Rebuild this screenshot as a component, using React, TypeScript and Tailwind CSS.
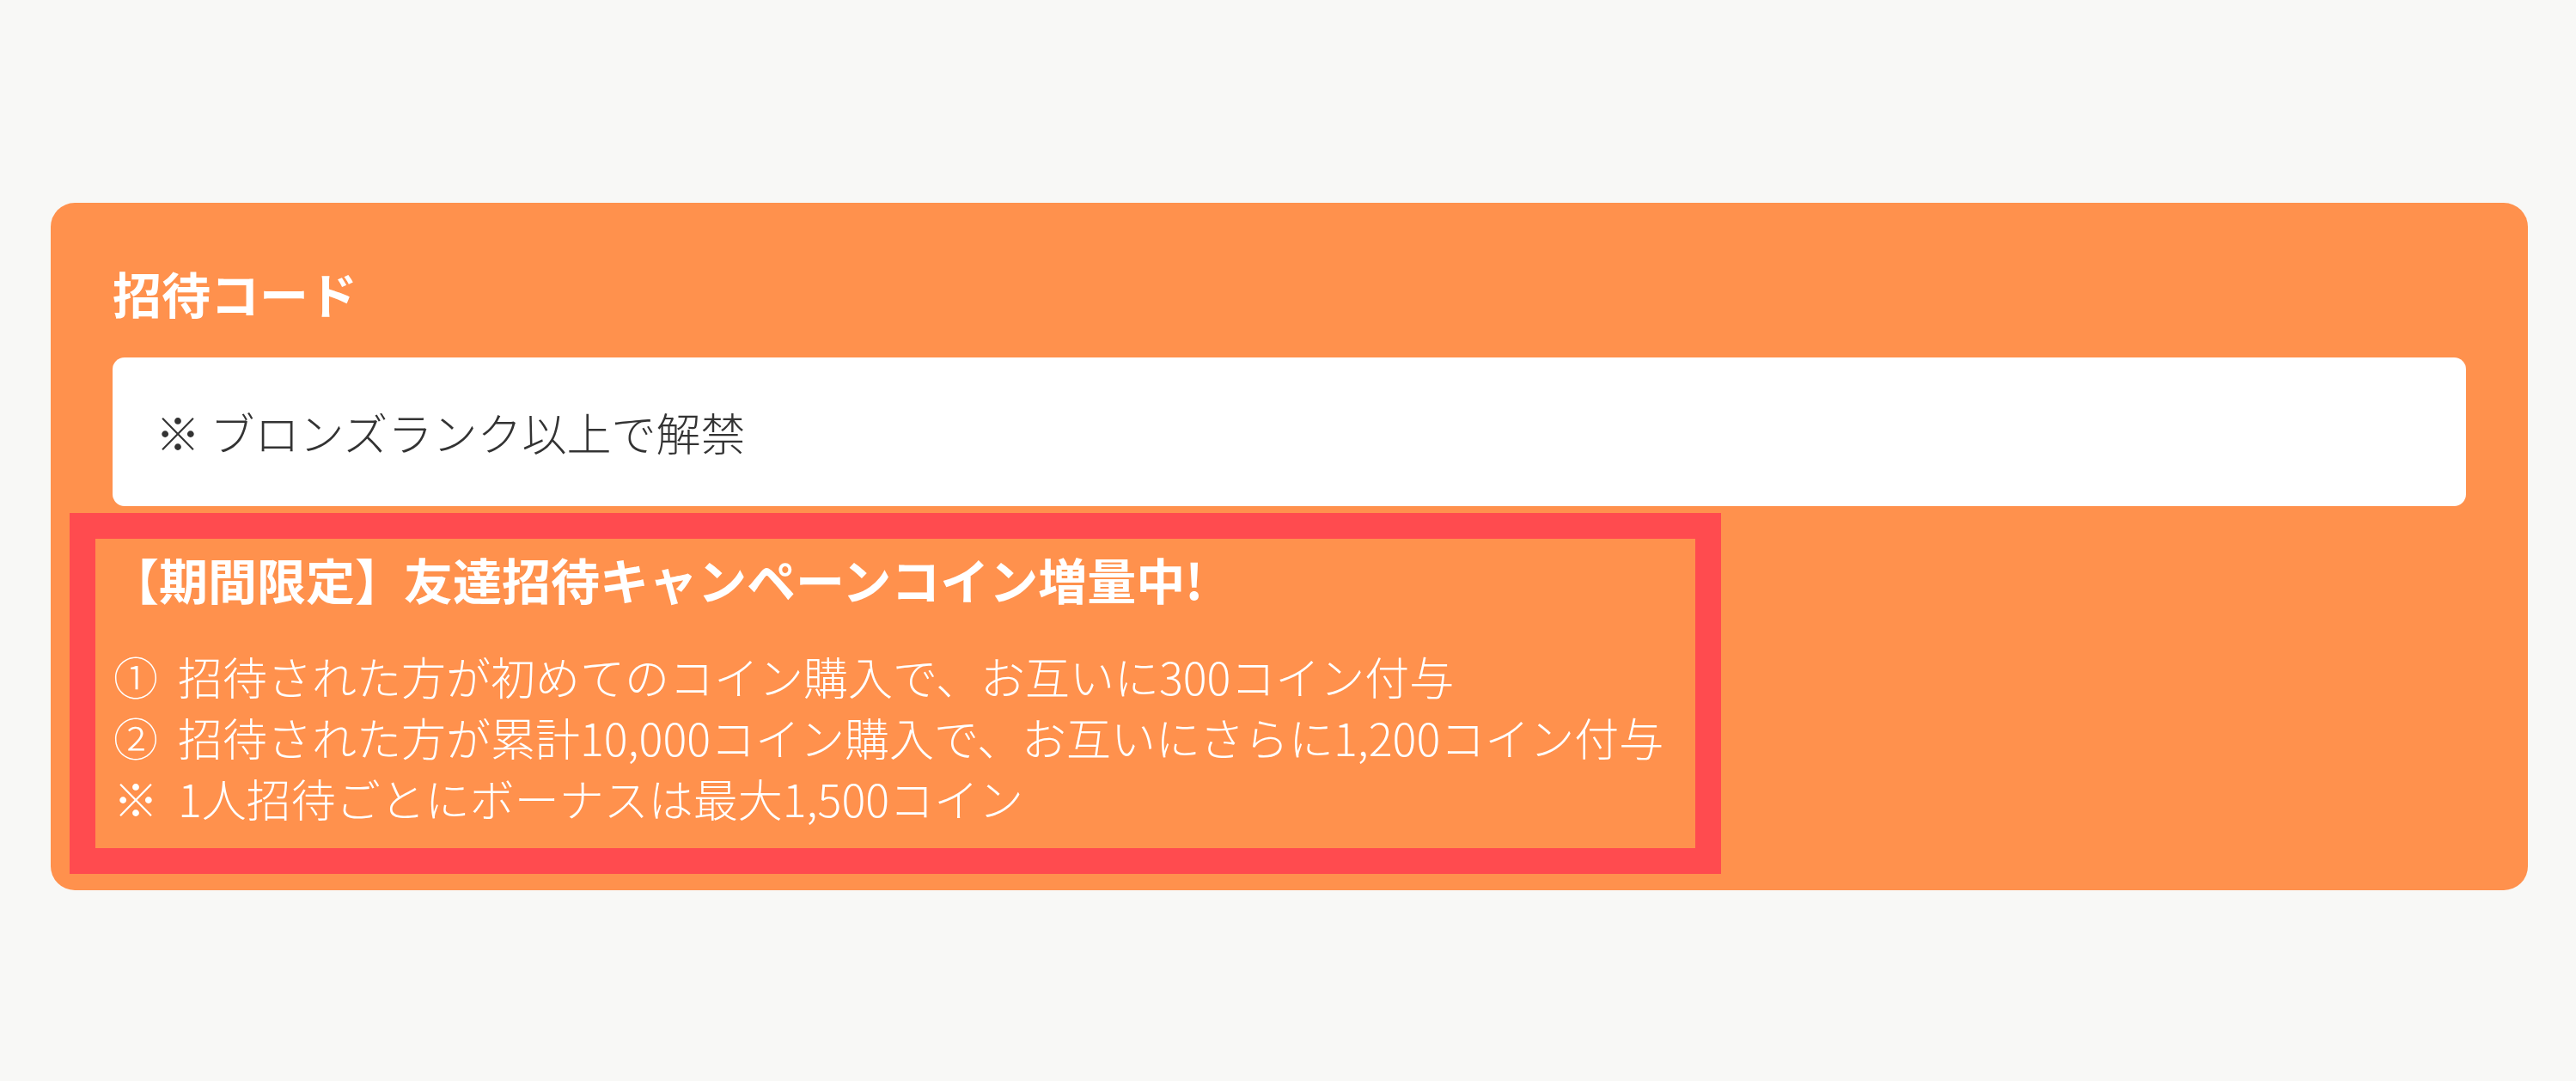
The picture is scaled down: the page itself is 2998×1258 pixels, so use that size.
import React from "react";

export default function App() {
  return (
    <div
      className="w-[2998px] h-[1258px] bg-[#f8f8f6] pt-[236px] pl-[59px] overflow-hidden"
      style={{ fontFamily: '"Noto Sans CJK JP", "Noto Sans", sans-serif' }}
    >
      <div className="w-[2883px] h-[800px] bg-[#ff914d] rounded-[28px] pt-[64px] px-[72px] pb-[19px] flex flex-col">
        <h2 className="text-white font-bold text-[57px] leading-[80px]">招待コード</h2>
        <div className="mt-[36px] h-[173px] bg-white rounded-[14px] flex items-center pl-[50px]">
          <span className="text-[#333333] text-[52px] leading-[70px] font-light whitespace-nowrap">
            ※ ブロンズランク以上で解禁
          </span>
        </div>
        <div className="mt-[8px] ml-[-50px] w-[1922px] h-[420px] border-[30px] border-[#ff4b4f] pt-[6px] pl-[21px]">
          <p className="text-white font-bold text-[57px] leading-[80px] whitespace-nowrap -ml-[4px]">
            【期間限定】友達招待キャンペーンコイン増量中!
          </p>
          <div className="mt-[38px] text-white text-[52px] leading-[71px] font-light whitespace-nowrap">
            <p>①&nbsp;&nbsp;招待された方が初めてのコイン購入で、お互いに300コイン付与</p>
            <p>②&nbsp;&nbsp;招待された方が累計10,000コイン購入で、お互いにさらに1,200コイン付与</p>
            <p>※&nbsp;&nbsp;1人招待ごとにボーナスは最大1,500コイン</p>
          </div>
        </div>
      </div>
    </div>
  );
}
